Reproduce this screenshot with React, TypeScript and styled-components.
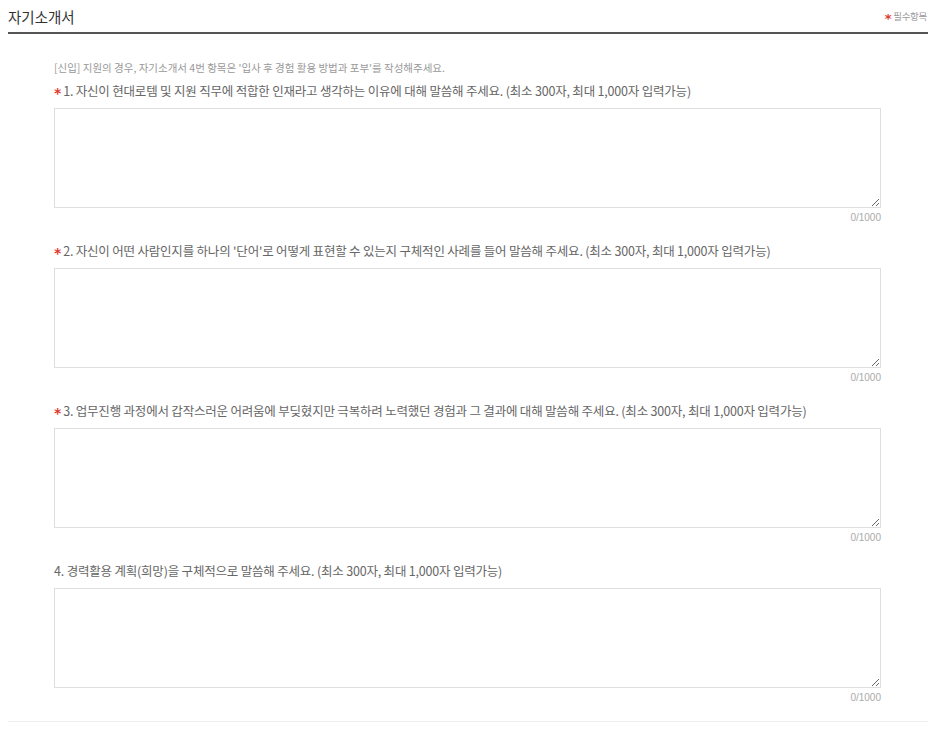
import React from "react";
import styled, { createGlobalStyle } from "styled-components";

const GlobalStyle = createGlobalStyle`
  body {
    margin: 0;
    background: #fff;
    font-family: "Noto Sans CJK KR", "Noto Sans", sans-serif;
    color: #555;
  }
`;

const questions = [
  {
    no: 1,
    required: true,
    text: "자신이 현대로템 및 지원 직무에 적합한 인재라고 생각하는 이유에 대해 말씀해 주세요. (최소 300자, 최대 1,000자 입력가능)",
  },
  {
    no: 2,
    required: true,
    text: "자신이 어떤 사람인지를 하나의 '단어'로 어떻게 표현할 수 있는지 구체적인 사례를 들어 말씀해 주세요. (최소 300자, 최대 1,000자 입력가능)",
  },
  {
    no: 3,
    required: true,
    text: "업무진행 과정에서 갑작스러운 어려움에 부딪혔지만 극복하려 노력했던 경험과 그 결과에 대해 말씀해 주세요. (최소 300자, 최대 1,000자 입력가능)",
  },
  {
    no: 4,
    required: false,
    text: "경력활용 계획(희망)을 구체적으로 말씀해 주세요. (최소 300자, 최대 1,000자 입력가능)",
  },
];

const App = () => {
  return (
    <>
      <GlobalStyle />
      <Page>
        <Header>
          <Title>자기소개서</Title>
          <RequiredNote>
            <Star>*</Star>필수항목
          </RequiredNote>
        </Header>

        <Body>
          <Notice>
            [신입] 지원의 경우, 자기소개서 4번 항목은 '입사 후 경험 활용 방법과 포부'를 작성해주세요.
          </Notice>

          {questions.map((q) => (
            <Question key={q.no}>
              <Label>
                {q.required && <Star $inline>*</Star>}
                {q.no}. {q.text}
              </Label>
              <Answer maxLength={1000} />
              <Counter>0/1000</Counter>
            </Question>
          ))}
        </Body>
      </Page>
    </>
  );
};

const Page = styled.div`
  padding: 0 8px;
`;

const Header = styled.div`
  display: flex;
  align-items: center;
  justify-content: space-between;
  height: 32px;
  border-bottom: 2px solid #555;
`;

const Title = styled.h2`
  margin: 0;
  font-size: 14.5px;
  font-weight: 400;
  color: #333;
`;

const RequiredNote = styled.span`
  display: flex;
  align-items: center;
  font-size: 9.5px;
  letter-spacing: -0.3px;
  color: #999;
  margin-right: 1px;
`;

const Star = styled.span<{ $inline?: boolean }>`
  color: #e0392f;
  font-family: "DejaVu Sans", sans-serif;
  font-weight: 700;
  font-size: ${(p) => (p.$inline ? "14px" : "13px")};
  line-height: 1;
  margin-right: 2px;
  position: relative;
  top: 2px;
`;

const Body = styled.div`
  padding: 25px 47px 15px 46px;
  border-bottom: 1px solid #eee;
`;

const Notice = styled.p`
  margin: 0 0 4px;
  font-size: 10.5px;
  line-height: 18px;
  color: #999;
`;

const Question = styled.div`
  & + & {
    margin-top: 15px;
  }
`;

const Label = styled.div`
  font-size: 12.5px;
  line-height: 20px;
  letter-spacing: -0.2px;
  color: #666;
  margin-bottom: 7px;
  white-space: nowrap;
`;

const Answer = styled.textarea`
  display: block;
  box-sizing: border-box;
  width: 100%;
  height: 100px;
  margin: 0;
  border: 1px solid #dedede;
  background: #fff;
  padding: 8px;
  font-family: inherit;
  font-size: 12px;
  outline: none;
`;

const Counter = styled.div`
  margin-top: 2px;
  text-align: right;
  font-family: "Liberation Sans", sans-serif;
  font-size: 10px;
  line-height: 16px;
  color: #aaa;
`;

export default App;
